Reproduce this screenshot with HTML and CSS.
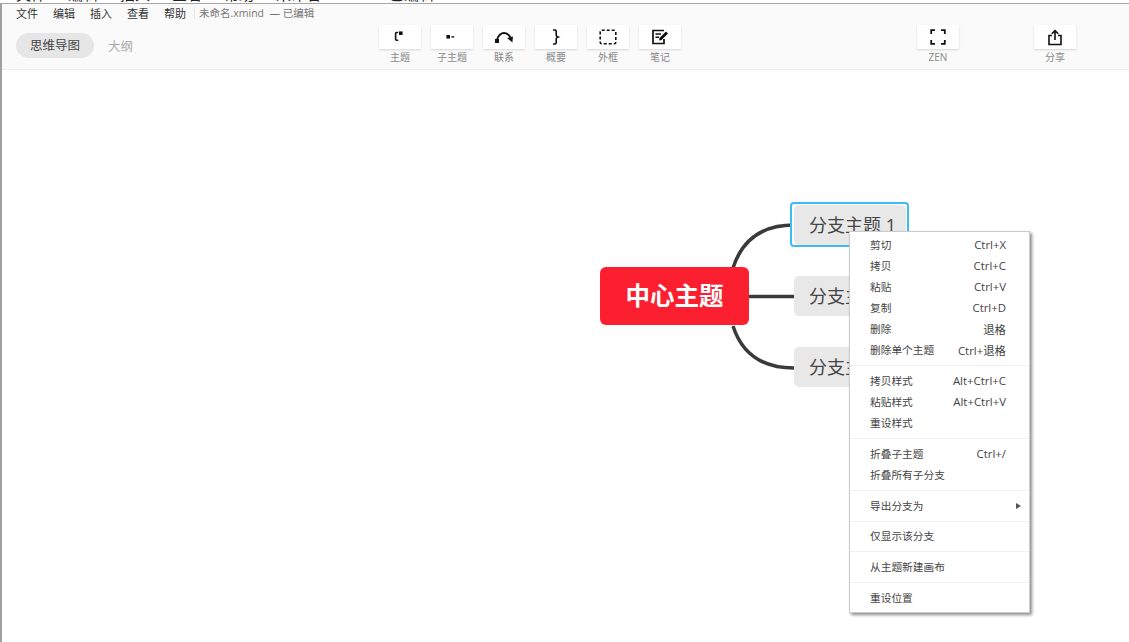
FILE: index.html
```html
<!DOCTYPE html>
<html lang="zh-CN">
<head>
  <meta charset="UTF-8">
  <title>未命名.xmind</title>
  <link rel="stylesheet" href="styles.css">
</head>
<body>
  <!-- window behind, only the bottom of its text shows -->
  <div class="behind">
    <div class="behind-row">
      <span>文件</span><span>编辑</span><span>插入</span><span>查看</span><span>帮助</span>
      <span class="behind-name">未命名.xmind</span><span>已编辑</span>
    </div>
  </div>

  <div class="app">
    <div class="menubar">
      <span class="menu-item">文件</span>
      <span class="menu-item">编辑</span>
      <span class="menu-item">插入</span>
      <span class="menu-item">查看</span>
      <span class="menu-item">帮助</span>
      <span class="file-name">未命名.xmind&nbsp; — 已编辑</span>
    </div>

    <div class="toolbar">
      <div class="tabs">
        <span class="tab tab-active">思维导图</span>
        <span class="tab">大纲</span>
      </div>

      <div class="tools">
        <div class="tool">
          <div class="tool-btn">
            <svg width="16" height="16" viewBox="0 0 16 16"><path d="M6.2 3.5H4.6Q3.6 3.5 3.6 4.6V10Q3.6 11.2 4.6 11.2H6.2" fill="none" stroke="#111" stroke-width="1.6"/><rect x="7" y="2.4" width="3.6" height="3.6" fill="#111"/></svg>
          </div>
          <span class="tool-label">主题</span>
        </div>
        <div class="tool">
          <div class="tool-btn">
            <svg width="16" height="16" viewBox="0 0 16 16"><rect x="2.4" y="6" width="3.6" height="3.6" fill="#111"/><rect x="7.4" y="7.2" width="2.8" height="1.4" fill="#111"/></svg>
          </div>
          <span class="tool-label">子主题</span>
        </div>
        <div class="tool">
          <div class="tool-btn">
            <svg width="22" height="16" viewBox="0 0 22 16"><rect x="2" y="10" width="4" height="4" fill="#111"/><path d="M4 10.5Q6.5 4 11 4Q15 4 17.5 8.5" fill="none" stroke="#111" stroke-width="1.8"/><path d="M14 9L20 7.4L19.4 13.6Z" fill="#111"/></svg>
          </div>
          <span class="tool-label">联系</span>
        </div>
        <div class="tool">
          <div class="tool-btn">
            <svg width="16" height="18" viewBox="0 0 16 18"><path d="M5 2H7Q8.2 2 8.2 3.2V7Q8.2 8.4 10 9Q8.2 9.6 8.2 11V14.8Q8.2 16 7 16H5" fill="none" stroke="#111" stroke-width="1.6"/></svg>
          </div>
          <span class="tool-label">概要</span>
        </div>
        <div class="tool">
          <div class="tool-btn">
            <svg width="18" height="16" viewBox="0 0 18 16"><rect x="1.2" y="1.2" width="15.6" height="13.6" rx="1.5" fill="none" stroke="#111" stroke-width="1.6" stroke-dasharray="3 2"/></svg>
          </div>
          <span class="tool-label">外框</span>
        </div>
        <div class="tool">
          <div class="tool-btn">
            <svg width="18" height="16" viewBox="0 0 18 16"><path d="M13 1.5H2V14.5H13V10" fill="none" stroke="#111" stroke-width="1.7"/><path d="M4.5 5H10M4.5 8.2H8" stroke="#111" stroke-width="1.5"/><path d="M8 11.5L8.6 8.8L15 2.4L17 4.4L10.6 10.9Z" fill="#111"/></svg>
          </div>
          <span class="tool-label">笔记</span>
        </div>
      </div>

      <div class="tool tool-zen">
        <div class="tool-btn">
          <svg width="16" height="16" viewBox="0 0 16 16"><path d="M1.2 5V1.2H5M11 1.2H14.8V5M14.8 11V14.8H11M5 14.8H1.2V11" fill="none" stroke="#111" stroke-width="1.8"/></svg>
        </div>
        <span class="tool-label">ZEN</span>
      </div>
      <div class="tool tool-share">
        <div class="tool-btn">
          <svg width="16" height="17" viewBox="0 0 16 17"><path d="M5 6.5H2V15.5H14V6.5H11" fill="none" stroke="#111" stroke-width="1.6"/><path d="M8 11V1.8M4.8 4.8L8 1.6L11.2 4.8" fill="none" stroke="#111" stroke-width="1.6"/></svg>
        </div>
        <span class="tool-label">分享</span>
      </div>
    </div>

    <div class="canvas">
      <svg class="lines" width="1127" height="571" viewBox="0 0 1127 571">
        <path d="M731 198C740 170 760 155 792 155" />
        <path d="M745 226.500H792" />
        <path d="M731 256C740 284 760 298 792 298" />
      </svg>
      <div class="node-center">中心主题</div>
      <div class="node-selected"><div class="node-inner">分支主题 1</div></div>
      <div class="node node-2">分支主题 2</div>
      <div class="node node-3">分支主题 3</div>

      <div class="context-menu">
        <div class="cm-item"><span>剪切</span><span class="cm-key">Ctrl+X</span></div>
        <div class="cm-item"><span>拷贝</span><span class="cm-key">Ctrl+C</span></div>
        <div class="cm-item"><span>粘贴</span><span class="cm-key">Ctrl+V</span></div>
        <div class="cm-item"><span>复制</span><span class="cm-key">Ctrl+D</span></div>
        <div class="cm-item"><span>删除</span><span class="cm-key">退格</span></div>
        <div class="cm-item"><span>删除单个主题</span><span class="cm-key">Ctrl+退格</span></div>
        <div class="cm-sep"></div>
        <div class="cm-item"><span>拷贝样式</span><span class="cm-key">Alt+Ctrl+C</span></div>
        <div class="cm-item"><span>粘贴样式</span><span class="cm-key">Alt+Ctrl+V</span></div>
        <div class="cm-item"><span>重设样式</span></div>
        <div class="cm-sep"></div>
        <div class="cm-item"><span>折叠子主题</span><span class="cm-key">Ctrl+/</span></div>
        <div class="cm-item"><span>折叠所有子分支</span></div>
        <div class="cm-sep"></div>
        <div class="cm-item"><span>导出分支为</span><span class="cm-arrow"></span></div>
        <div class="cm-sep cm-sep-tight"></div>
        <div class="cm-item"><span>仅显示该分支</span></div>
        <div class="cm-sep"></div>
        <div class="cm-item"><span>从主题新建画布</span></div>
        <div class="cm-sep"></div>
        <div class="cm-item"><span>重设位置</span></div>
      </div>
    </div>
  </div>
</body>
</html>
```

FILE: styles.css
```css
html, body {
  height: 100%;
}

body {
  margin: 0;
  overflow: hidden;
  background-color: #fff;
  font-family: "Open Sans", "Noto Sans CJK SC", sans-serif;
  color: #444;
}

.behind {
  height: 3px;
  overflow: hidden;
  background-color: #fff;
}

.behind-row {
  display: flex;
  gap: 22px;
  margin-top: -16px;
  padding-left: 16px;
  font-size: 15px;
  line-height: 20px;
  color: #222;
  white-space: nowrap;
}

.behind-name {
  width: 91px;
}

.app {
  display: flex;
  flex-direction: column;
  height: 639px;
  border-top: 1px solid #a8a8a8;
  border-left: 2px solid #a0a0a0;
}

.menubar {
  display: flex;
  align-items: center;
  height: 16px;
  padding: 1px 0 0 14px;
  background-color: #fafafa;
  font-size: 11px;
  color: #333;
}

.menu-item {
  width: 37px;
  white-space: nowrap;
}

.file-name {
  padding-left: 4px;
  margin-left: -7px;
  border-left: 1px solid #e4e4e4;
  font-size: 10.5px;
  line-height: 12px;
  color: #777;
  white-space: nowrap;
}

.toolbar {
  position: relative;
  display: flex;
  height: 48px;
  border-bottom: 1px solid #eee;
  background-color: #fafafa;
}

.tabs {
  display: flex;
  align-items: center;
  gap: 14px;
  width: 377px;
  height: 25px;
  margin-top: 12px;
  padding-left: 14px;
  box-sizing: border-box;
  font-size: 12.5px;
  color: #aaa;
}

.tab-active {
  width: 78px;
  height: 25px;
  border-radius: 13px;
  background-color: #e6e6e6;
  color: #444;
  line-height: 25px;
  text-align: center;
}

.tools {
  display: flex;
  gap: 10px;
  padding-top: 4px;
}

.tool {
  display: flex;
  flex-direction: column;
  align-items: center;
  width: 42px;
}

.tool-zen {
  margin-left: 236px;
  padding-top: 4px;
}

.tool-share {
  margin-left: 75px;
  padding-top: 4px;
}

.tool-btn {
  display: flex;
  align-items: center;
  justify-content: center;
  width: 42px;
  height: 24px;
  background-color: #fff;
  box-shadow: 0 1px 2px rgba(0, 0, 0, 0.15);
}

.tool-label {
  margin-top: 2px;
  font-size: 10px;
  line-height: 13px;
  color: #888;
  white-space: nowrap;
}

.canvas {
  position: relative;
  flex: 1;
  background-color: #fff;
}

.lines {
  position: absolute;
  left: 0;
  top: 0;
}

.lines path {
  fill: none;
  stroke: #3a3a3a;
  stroke-width: 3.5;
}

.node-center {
  position: absolute;
  left: 598px;
  top: 197px;
  width: 149px;
  height: 58px;
  border-radius: 6px;
  background-color: #fb1f2f;
  color: #fff;
  font-size: 24.5px;
  font-weight: 700;
  line-height: 58px;
  text-align: center;
}

.node-selected {
  position: absolute;
  left: 788px;
  top: 132px;
  padding: 1px 1px 0 2px;
  border: 2px solid #3cbcf2;
  border-radius: 4px;
  background-color: #fff;
}

.node-inner,
.node {
  width: 112px;
  height: 40px;
  padding-left: 15px;
  box-sizing: border-box;
  border-radius: 5px;
  background-color: #e8e8e8;
  font-size: 18px;
  line-height: 40px;
  white-space: nowrap;
}

.node {
  position: absolute;
  left: 792px;
}

.node-2 {
  top: 206px;
}

.node-3 {
  top: 277px;
}

.context-menu {
  position: absolute;
  left: 847px;
  top: 161px;
  width: 179px;
  padding: 2px 0 4px;
  border: 1px solid #ccc;
  background-color: #fff;
  box-shadow: 2px 2px 3px rgba(0, 0, 0, 0.45);
  font-size: 10.7px;
  color: #444;
}

.cm-item {
  display: flex;
  align-items: center;
  justify-content: space-between;
  height: 21px;
  padding: 0 23px 0 20px;
  white-space: nowrap;
}

.cm-key {
  font-size: 11.4px;
}

.cm-sep {
  height: 1px;
  margin: 4.5px 0;
  background-color: #f0f0f0;
}

.cm-sep-tight {
  margin-bottom: 3.5px;
}

.cm-arrow {
  width: 0;
  height: 0;
  margin-right: -15px;
  border-top: 3.5px solid transparent;
  border-bottom: 3.5px solid transparent;
  border-left: 5px solid #555;
}
```
